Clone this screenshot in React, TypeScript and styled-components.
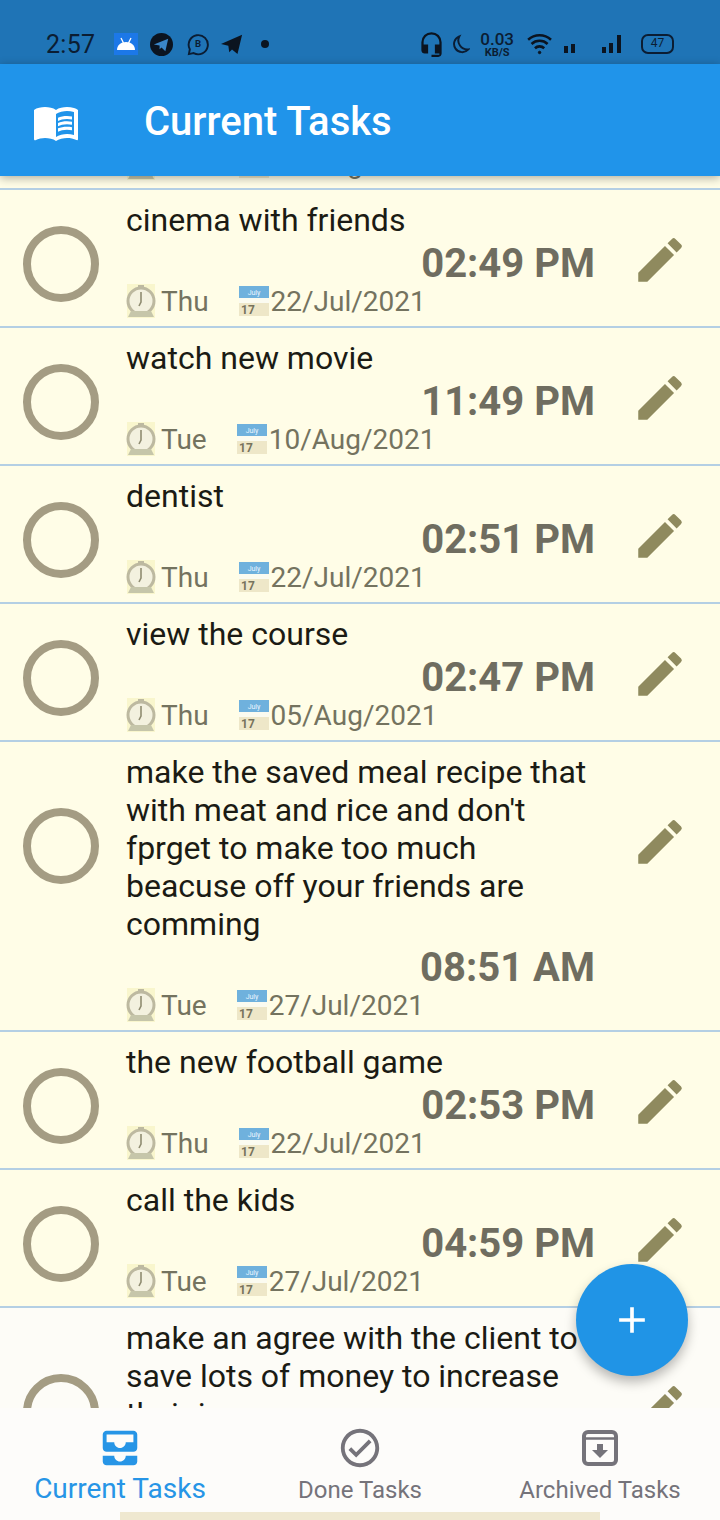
import React from 'react';
import styled, { createGlobalStyle } from 'styled-components';
import { MdMenuBook, MdEdit, MdAllInbox, MdOutlineCheckCircle, MdHeadsetMic, MdAdd } from 'react-icons/md';

const Global = createGlobalStyle`
  html, body { margin: 0; padding: 0; background: #fefcf6; }
  * { box-sizing: border-box; }
`;

const Screen = styled.div`
  position: relative;
  width: 720px;
  height: 1520px;
  overflow: hidden;
  display: flex;
  flex-direction: column;
  font-family: Roboto, "Liberation Sans", sans-serif;
  background: #fefdf0;
`;

const StatusBar = styled.div`
  height: 64px;
  flex: none;
  background: #1f74b6;
  display: flex;
  align-items: center;
  justify-content: space-between;
  padding: 24px 46px 0 46px;
  color: #0b1d33;
`;
const StatusGroup = styled.div`
  display: flex;
  align-items: center;
`;
const Slot = styled.div<{ $ml?: number }>`
  display: flex;
  align-items: center;
  margin-left: ${p => p.$ml ?? 0}px;
`;
const Clock = styled.span`
  font-size: 25px;
  width: 52px;
  letter-spacing: 0.3px;
`;
const Speed = styled.div`
  display: flex;
  flex-direction: column;
  align-items: center;
  font-weight: 500;
  line-height: 1;
  font-size: 17px;
  color: #0b1d33;
  small { font-size: 11px; font-weight: 700; margin-top: -1px; }
`;
const Battery = styled.div`
  width: 33px;
  height: 20px;
  border: 2.5px solid #0b1d33;
  border-radius: 7px;
  font-size: 12px;
  line-height: 15px;
  text-align: center;
`;

const AppBar = styled.header`
  position: relative;
  z-index: 2;
  height: 112px;
  flex: none;
  background: #2094ea;
  display: flex;
  align-items: center;
  padding: 4px 0 0 32px;
  color: #fff;
  box-shadow: 0 2px 9px rgba(0, 0, 0, 0.32);
`;
const Title = styled.h1`
  margin: 0 0 0 64px;
  font-size: 40px;
  font-weight: 500;
  line-height: 1;
`;

const List = styled.main`
  flex: 1;
  min-height: 0;
  overflow: hidden;
  background: #fefdf0;
`;
const Row = styled.div<{ $offset?: number; $pale?: boolean }>`
  display: flex;
  align-items: flex-start;
  margin-top: ${p => p.$offset ?? 0}px;
  border-bottom: 2px solid #b4cfe4;
  background: ${p => (p.$pale ? '#fdfcf7' : '#fffde7')};
  padding: 11px 0 8px 23px;
`;
const Check = styled.div<{ $shift: number }>`
  width: 76px;
  height: 76px;
  flex: none;
  margin-top: ${p => 25 + p.$shift}px;
  border: 8px solid #a49c83;
  border-radius: 50%;
`;
const Body = styled.div`
  width: 470px;
  margin-left: 27px;
  flex: none;
`;
const TaskName = styled.div`
  font-size: 32px;
  line-height: 38px;
  color: #1b1b14;
`;
const Time = styled.div`
  font-size: 40px;
  font-weight: 700;
  line-height: 44px;
  color: #6f6d60;
  text-align: right;
  padding: 3px 1px 0 0;
  margin-bottom: -2px;
`;
const Meta = styled.div`
  display: flex;
  align-items: center;
  height: 34px;
  font-size: 28px;
  color: #74735f;
  svg { flex: none; }
`;
const Day = styled.span`
  margin-right: 29px;
`;
const CalendarBox = styled.span`
  display: flex;
  margin-right: 1px;
`;
const EditBtn = styled.div<{ $shift: number }>`
  margin-left: 35px;
  margin-top: ${p => 30 + p.$shift}px;
  color: #8f8a5e;
  display: flex;
`;

const Nav = styled.nav`
  height: 112px;
  flex: none;
  position: relative;
  z-index: 1;
  background: #fdfcfa;
  display: grid;
  grid-template-columns: repeat(3, 240px);
`;
const NavItem = styled.div<{ $active?: boolean }>`
  display: flex;
  flex-direction: column;
  align-items: center;
  padding-top: 17px;
  color: ${p => (p.$active ? '#2795e6' : '#75737a')};
  font-size: ${p => (p.$active ? 28 : 24)}px;
  line-height: ${p => (p.$active ? 36 : 38)}px;
  white-space: nowrap;
  svg { flex: none; }
`;
const HomeBand = styled.div`
  position: absolute;
  left: 120px;
  bottom: 0;
  width: 480px;
  height: 8px;
  background: #efe8d0;
`;
const Fab = styled.button`
  position: absolute;
  z-index: 3;
  left: 576px;
  top: 1264px;
  width: 112px;
  height: 112px;
  border: 0;
  padding: 0;
  border-radius: 50%;
  background: #2094e6;
  color: #fff;
  display: flex;
  align-items: center;
  justify-content: center;
  box-shadow: 0 6px 12px rgba(0, 0, 0, 0.28);
`;

const ClockEmoji = () => (
  <svg width="35" height="36" viewBox="3 0 35 36">
    <rect x="4" y="1" width="28" height="34" fill="#f4f0b4" opacity=".5" />
    <circle cx="18" cy="18" r="13" fill="#f3f1df" stroke="#bdb9a0" strokeWidth="3" />
    <path d="M18 9v10l-2 4" stroke="#8f8c70" strokeWidth="1.6" fill="none" />
    <rect x="15" y="2" width="6" height="3" fill="#bdb9a0" />
    <path d="M5 34l3-6h20l3 6z" fill="#c6c6aa" />
  </svg>
);
const CalendarEmoji = () => (
  <svg width="32" height="32" viewBox="0 0 32 32">
    <rect x="1" y="1" width="30" height="30" fill="#eee7c8" />
    <rect x="1" y="1" width="30" height="12" fill="#6fb1dd" />
    <rect x="1" y="13" width="30" height="5" fill="#fbfbf0" />
    <text x="16" y="10" fontSize="7" fontFamily="Roboto" fill="#eaf6ff" textAnchor="middle">July</text>
    <text x="10" y="29" fontSize="12" fontWeight="700" fontFamily="Roboto" fill="#77735c" textAnchor="middle">17</text>
  </svg>
);

const Android = () => (
  <svg width="24" height="22" viewBox="0 0 24 22">
    <rect width="24" height="22" fill="#1c78e8" />
    <path d="M3 17c0-5 4-8 9-8s9 3 9 8z" fill="#fff" />
    <path d="M7 5l2.500 5M17 5l-2.500 5" stroke="#fff" strokeWidth="1.3" />
  </svg>
);
const TelegramCircle = () => (
  <svg width="23" height="23" viewBox="0 0 24 24">
    <circle cx="12" cy="12" r="12" fill="#0b1420" />
    <path d="M4 12l15-6-3 13-4-4-2 2v-4z" fill="#3a86c8" />
  </svg>
);
const Business = () => (
  <svg width="23" height="25" viewBox="0 0 24 26" fill="none">
    <path d="M3 23l1-5a10 10 0 1 1 4 4z" stroke="#0b1d33" strokeWidth="2" />
    <text x="12.500" y="16" fontSize="10" fontWeight="700" fontFamily="Roboto" fill="#0b1d33" textAnchor="middle">B</text>
  </svg>
);
const Plane = () => (
  <svg width="22" height="22" viewBox="0 0 24 24">
    <path d="M0 12L23 2l-5 21-6-5-3 3-1-7z" fill="#0b1420" />
  </svg>
);
const Dot = () => (
  <svg width="8" height="8" viewBox="0 0 8 8"><circle cx="4" cy="4" r="4" fill="#0b1420" /></svg>
);
const Moon = () => (
  <svg width="18" height="21" viewBox="0 0 22 24" fill="none">
    <path d="M9 2a10 10 0 1 0 11 16A11 11 0 0 1 9 2z" stroke="#0b1d33" strokeWidth="2.400" />
  </svg>
);
const Wifi = () => (
  <svg width="26" height="22" viewBox="0 0 30 26" fill="none" stroke="#0b1420" strokeWidth="3">
    <path d="M1 8a20 20 0 0 1 27 0M5 13a14 14 0 0 1 19 0M9 18a8 8 0 0 1 11 0" />
    <circle cx="14.500" cy="23" r="1.500" fill="#0b1420" strokeWidth="1" />
  </svg>
);
const WeakBars = () => (
  <svg width="12" height="20" viewBox="0 0 12 20" fill="#0b1420">
    <rect x="0" y="12" width="4" height="7" />
    <rect x="7" y="10" width="4" height="9" />
  </svg>
);
const StrongBars = () => (
  <svg width="19" height="20" viewBox="0 0 19 20" fill="#0b1420">
    <rect x="0" y="13" width="4" height="6" />
    <rect x="7" y="9" width="4" height="10" />
    <rect x="15" y="1" width="4" height="18" />
  </svg>
);
const ArchiveIcon = () => (
  <svg width="46" height="46" viewBox="0 0 46 46" fill="none">
    <rect x="7" y="7" width="32" height="32" rx="4" stroke="#75737a" strokeWidth="4" />
    <path d="M7 13.500h32" stroke="#75737a" strokeWidth="2.500" />
    <path d="M20 19h6v6h5l-8 8-8-8h5z" fill="#75737a" />
  </svg>
);

type Task = { name: string; time: string; day: string; date: string; offset?: number; pale?: boolean; shift?: number };
const tasks: Task[] = [
  { name: 'go to the gym', time: '02:49 PM', day: 'Thu', date: '12/Aug/2021', offset: -124 },
  { name: 'cinema with friends', time: '02:49 PM', day: 'Thu', date: '22/Jul/2021' },
  { name: 'watch new movie', time: '11:49 PM', day: 'Tue', date: '10/Aug/2021' },
  { name: 'dentist', time: '02:51 PM', day: 'Thu', date: '22/Jul/2021' },
  { name: 'view the course', time: '02:47 PM', day: 'Thu', date: '05/Aug/2021' },
  { name: "make the saved meal recipe that with meat and rice and don't fprget to make too much beacuse off your friends are comming", time: '08:51 AM', day: 'Tue', date: '27/Jul/2021', shift: 30 },
  { name: 'the new football game', time: '02:53 PM', day: 'Thu', date: '22/Jul/2021' },
  { name: 'call the kids', time: '04:59 PM', day: 'Tue', date: '27/Jul/2021' },
  { name: 'make an agree with the client to save lots of money to increase their income', time: '06:30 PM', day: 'Tue', date: '27/Jul/2021', pale: true, shift: 30 },
];

export default function App() {
  return (
    <Screen>
      <Global />
      <StatusBar>
        <StatusGroup>
          <Clock>2:57</Clock>
          <Slot $ml={16}><Android /></Slot>
          <Slot $ml={12}><TelegramCircle /></Slot>
          <Slot $ml={13}><Business /></Slot>
          <Slot $ml={12}><Plane /></Slot>
          <Slot $ml={18}><Dot /></Slot>
        </StatusGroup>
        <StatusGroup>
          <MdHeadsetMic size={27} color="#0b1420" />
          <Slot $ml={7}><Moon /></Slot>
          <Slot $ml={10}><Speed>0.03<small>KB/S</small></Speed></Slot>
          <Slot $ml={13}><Wifi /></Slot>
          <Slot $ml={11}><WeakBars /></Slot>
          <Slot $ml={26}><StrongBars /></Slot>
          <Slot $ml={20}><Battery>47</Battery></Slot>
        </StatusGroup>
      </StatusBar>
      <AppBar>
        <MdMenuBook size={48} />
        <Title>Current Tasks</Title>
      </AppBar>
      <List>
        {tasks.map(t => (
          <Row key={t.name} $offset={t.offset} $pale={t.pale}>
            <Check $shift={t.shift ?? 0} />
            <Body>
              <TaskName>{t.name}</TaskName>
              <Time>{t.time}</Time>
              <Meta>
                <ClockEmoji />
                <Day>{t.day}</Day>
                <CalendarBox><CalendarEmoji /></CalendarBox>
                {t.date}
              </Meta>
            </Body>
            <EditBtn $shift={t.shift ?? 0}><MdEdit size={58} /></EditBtn>
          </Row>
        ))}
      </List>
      <Nav>
        <NavItem $active><MdAllInbox size={46} />Current Tasks</NavItem>
        <NavItem><MdOutlineCheckCircle size={46} />Done Tasks</NavItem>
        <NavItem><ArchiveIcon />Archived Tasks</NavItem>
        <HomeBand />
      </Nav>
      <Fab aria-label="Add task"><MdAdd size={44} /></Fab>
    </Screen>
  );
}
